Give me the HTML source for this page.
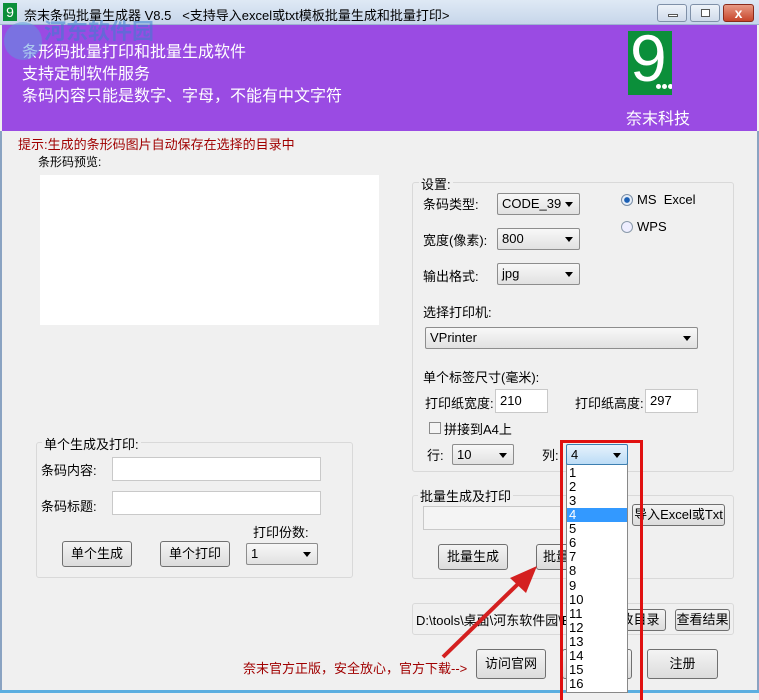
<!DOCTYPE html>
<html><head><meta charset="utf-8"><style>
*{box-sizing:border-box;margin:0;padding:0}
body{width:759px;height:693px;position:relative;overflow:hidden;background:#f0f0f0;font-family:"Liberation Sans","Noto Sans CJK SC",sans-serif;font-size:12px;color:#000}
.a{position:absolute}
.title{left:0;top:0;width:759px;height:25px;background:linear-gradient(#dfe9f5,#c6d6ea);border-bottom:1px solid #9db3d1}
.purple{left:2px;top:25px;width:755px;height:106px;background:#9a4be3}
.grp{border:1px solid #d9d9d9;border-radius:3px}
.inp{background:#fff;border:1px solid #c9c9c9}
.btn{border:1px solid #707070;border-radius:3px;background:linear-gradient(#f4f4f4,#dcdcdc);text-align:center;font-size:13px}
.sel{border:1px solid #8d8d8d;border-radius:2px;background:linear-gradient(#f8f8f8,#e1e1e1);padding-left:4px;font-size:13px}
.sel:after{content:"";position:absolute;right:6px;top:50%;margin-top:-2px;border:4px solid transparent;border-top:5px solid #000;border-bottom:0}
.wb{top:4px;height:18px;border:1px solid #7f90a8;border-radius:3px;background:linear-gradient(#eef3f9,#cfdaea)}
.l{font-size:13px}
</style></head><body>
<div class="a title"></div>
<div class="a" style="left:3px;top:3px;width:14px;height:18px;background:#0b8f3a;color:#fff;font-size:14px;line-height:18px;text-align:center">9</div>
<div class="a" style="left:24px;top:5px;font-size:13px">奈末条码批量生成器 V8.5 &nbsp;&nbsp;&lt;支持导入excel或txt模板批量生成和批量打印&gt;</div>
<div class="a wb" style="left:657px;width:30px"><div class="a" style="left:10px;top:9px;width:10px;height:3px;background:#fff;border:1px solid #555"></div></div>
<div class="a wb" style="left:690px;width:30px"><div class="a" style="left:10px;top:4px;width:9px;height:8px;border:1px solid #555;background:#fff"></div></div>
<div class="a wb" style="left:723px;width:31px;background:linear-gradient(#e89a84,#c7452b);border-color:#8a2a1a;color:#fff;font-weight:bold;text-align:center;line-height:16px;font-size:14px">x</div>
<div class="a purple"></div>
<div class="a" style="left:22px;top:42px;color:#fff;font-size:16px;line-height:22px">条形码批量打印和批量生成软件<br>支持定制软件服务<br>条码内容只能是数字、字母，不能有中文字符</div>
<div class="a" style="left:44px;top:14px;color:#3a7fd0;font-size:22px;font-weight:bold;opacity:.55">河东软件园</div>
<div class="a" style="left:4px;top:22px;width:38px;height:38px;border-radius:50%;background:#5a9ae0;opacity:.5"></div>
<div class="a" style="left:628px;top:31px;width:44px;height:64px;background:#0b8f3a;overflow:hidden">
<div class="a" style="left:2px;top:-8px;color:#fff;font-size:66px;line-height:70px">9</div>
<div class="a" style="left:28px;top:53px;width:5px;height:5px;border-radius:50%;background:#fff"></div>
<div class="a" style="left:34px;top:53px;width:5px;height:5px;border-radius:50%;background:#fff"></div>
<div class="a" style="left:40px;top:53px;width:5px;height:5px;border-radius:50%;background:#fff"></div>
</div>
<div class="a" style="left:626px;top:105px;color:#fff;font-size:16px">奈末科技</div>
<div class="a" style="left:0;top:131px;width:2px;height:562px;background:#8aa3c2"></div>
<div class="a" style="left:757px;top:131px;width:2px;height:562px;background:#8aa3c2"></div>
<div class="a" style="left:0;top:690px;width:759px;height:3px;background:#5aaee0"></div>
<div class="a" style="left:18px;top:134px;color:#a00000;font-size:13px">提示:生成的条形码图片自动保存在选择的目录中</div>
<div class="a" style="left:38px;top:153px;font-size:12px">条形码预览:</div>
<div class="a" style="left:40px;top:175px;width:339px;height:150px;background:#fff"></div>

<div class="a grp" style="left:36px;top:442px;width:317px;height:136px"></div>
<div class="a l" style="left:42px;top:434px;background:#f0f0f0;padding:0 2px">单个生成及打印:</div>
<div class="a l" style="left:41px;top:460px">条码内容:</div>
<div class="a inp" style="left:112px;top:457px;width:209px;height:24px"></div>
<div class="a l" style="left:41px;top:496px">条码标题:</div>
<div class="a inp" style="left:112px;top:491px;width:209px;height:24px"></div>
<div class="a l" style="left:253px;top:522px">打印份数:</div>
<div class="a btn" style="left:62px;top:541px;width:70px;height:26px;line-height:24px">单个生成</div>
<div class="a btn" style="left:160px;top:541px;width:70px;height:26px;line-height:24px">单个打印</div>
<div class="a sel" style="left:246px;top:543px;width:72px;height:22px;line-height:20px">1</div>

<div class="a grp" style="left:412px;top:182px;width:322px;height:290px"></div>
<div class="a l" style="left:419px;top:174px;background:#f0f0f0;padding:0 2px">设置:</div>
<div class="a l" style="left:423px;top:194px">条码类型:</div>
<div class="a sel" style="left:497px;top:193px;width:83px;height:22px;line-height:20px">CODE_39</div>
<div class="a l" style="left:423px;top:230px">宽度(像素):</div>
<div class="a sel" style="left:497px;top:228px;width:83px;height:22px;line-height:20px">800</div>
<div class="a l" style="left:423px;top:266px">输出格式:</div>
<div class="a sel" style="left:497px;top:263px;width:83px;height:22px;line-height:20px">jpg</div>
<div class="a" style="left:621px;top:194px;width:12px;height:12px;border-radius:50%;border:1px solid #7a8ea6;background:radial-gradient(#1a5fb4 35%,#e6eef8 45%)"></div>
<div class="a l" style="left:637px;top:192px">MS&nbsp; Excel</div>
<div class="a" style="left:621px;top:221px;width:12px;height:12px;border-radius:50%;border:1px solid #8a9aaa;background:#eef"></div>
<div class="a l" style="left:637px;top:219px">WPS</div>
<div class="a l" style="left:423px;top:302px">选择打印机:</div>
<div class="a sel" style="left:425px;top:327px;width:273px;height:22px;line-height:20px">VPrinter</div>
<div class="a l" style="left:423px;top:367px">单个标签尺寸(毫米):</div>
<div class="a l" style="left:425px;top:393px">打印纸宽度:</div>
<div class="a inp" style="left:495px;top:389px;width:53px;height:24px;padding:3px 4px;font-size:13px">210</div>
<div class="a l" style="left:575px;top:393px">打印纸高度:</div>
<div class="a inp" style="left:645px;top:389px;width:53px;height:24px;padding:3px 4px;font-size:13px">297</div>
<div class="a" style="left:429px;top:422px;width:12px;height:12px;border:1px solid #8a8a8a;background:#f4f4f4"></div>
<div class="a l" style="left:444px;top:419px">拼接到A4上</div>
<div class="a l" style="left:427px;top:445px">行:</div>
<div class="a sel" style="left:452px;top:444px;width:62px;height:21px;line-height:19px">10</div>
<div class="a l" style="left:542px;top:445px">列:</div>

<div class="a grp" style="left:412px;top:495px;width:322px;height:84px"></div>
<div class="a l" style="left:418px;top:486px;background:#f0f0f0;padding:0 2px">批量生成及打印</div>
<div class="a inp" style="left:423px;top:506px;width:140px;height:24px;background:#f4f4f4"></div>
<div class="a btn" style="left:632px;top:504px;width:93px;height:22px;line-height:20px;font-size:13px">导入Excel或Txt</div>
<div class="a btn" style="left:438px;top:544px;width:70px;height:26px;line-height:24px">批量生成</div>
<div class="a btn" style="left:536px;top:544px;width:40px;height:26px;line-height:24px">批量</div>
<div class="a grp" style="left:412px;top:603px;width:322px;height:32px"></div>
<div class="a l" style="left:416px;top:610px">D:\tools\桌面\河东软件园\B</div>
<div class="a btn" style="left:614px;top:609px;width:52px;height:22px;line-height:20px">改目录</div>
<div class="a btn" style="left:675px;top:609px;width:55px;height:22px;line-height:20px">查看结果</div>
<div class="a" style="left:243px;top:658px;color:#a00000;font-size:13px">奈末官方正版，安全放心，官方下载--&gt;</div>
<div class="a btn" style="left:476px;top:649px;width:70px;height:30px;line-height:28px">访问官网</div>
<div class="a btn" style="left:562px;top:649px;width:70px;height:30px"></div>
<div class="a btn" style="left:647px;top:649px;width:71px;height:30px;line-height:28px">注册</div>

<svg class="a" style="left:440px;top:560px" width="110" height="100"><line x1="3" y1="97" x2="80" y2="22" stroke="#d42020" stroke-width="4"/><polygon points="97,6 70,18 86,33" fill="#d42020"/></svg>

<div class="a" style="left:566px;top:463px;width:62px;height:230px;background:#fff;border:1px solid #888;font-size:13px;line-height:14.07px;padding-left:2px;padding-top:2px">
1<br>2<br>3<br><div style="background:#3399ff;color:#fff;margin-left:-2px;padding-left:2px">4</div>5<br>6<br>7<br>8<br>9<br>10<br>11<br>12<br>13<br>14<br>15<br>16</div>
<div class="a sel" style="left:566px;top:444px;width:62px;height:21px;line-height:19px;background:linear-gradient(#e6f2fc,#bcdcf6);border-color:#3c7fb1">4</div>
<div class="a" style="left:560px;top:440px;width:83px;height:260px;border:3px solid #e01010;border-bottom:0"></div>
</body></html>
